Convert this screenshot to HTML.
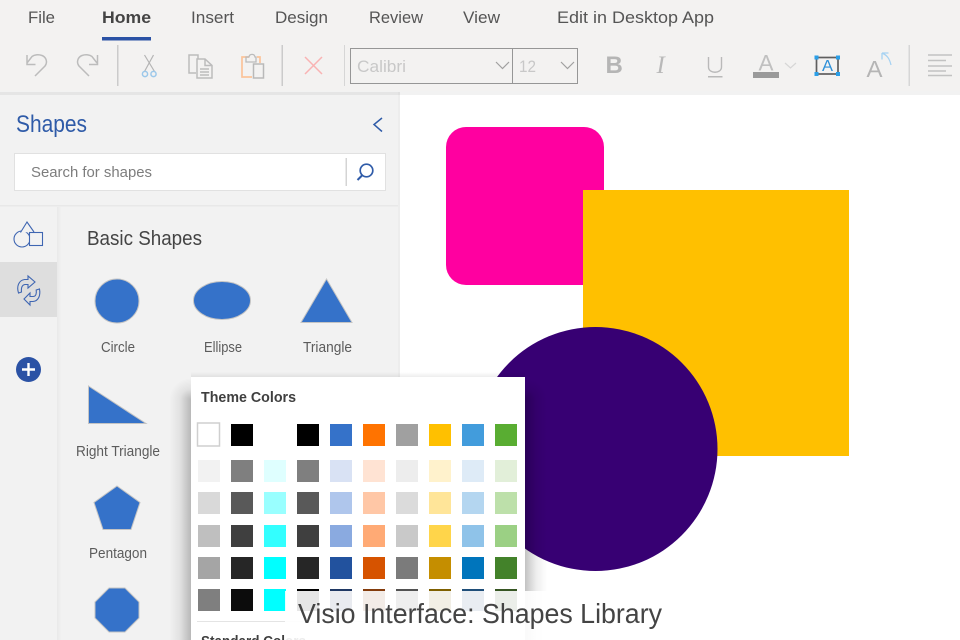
<!DOCTYPE html>
<html lang="en">
<head>
<meta charset="utf-8">
<title>Visio Interface: Shapes Library</title>
<style>
html,body{margin:0;padding:0;width:960px;height:640px;overflow:hidden;background:#fff}
svg{display:block;position:absolute;left:0;top:0}
text{font-family:"Liberation Sans",sans-serif}
.tab{font-size:17px;fill:#555}
.lbl{font-size:15px;fill:#5c5c5c}
.shp{fill:#3572c9;stroke:#c4c4c4;stroke-width:1}
.ic{fill:none;stroke:#bcbcbc;stroke-width:1.5}
.bl{fill:none;stroke:#3f66b2;stroke-width:1.100}
</style>
</head>
<body>
<svg width="960" height="640" viewBox="0 0 960 640" xmlns="http://www.w3.org/2000/svg">
<defs>
<linearGradient id="g1" x1="0" x2="1" y1="0" y2="0"><stop offset="0" stop-color="#000" stop-opacity=".035"/><stop offset="1" stop-color="#000" stop-opacity="0"/></linearGradient>
<linearGradient id="sl" x1="1" x2="0" y1="0" y2="0"><stop offset="0" stop-color="#000" stop-opacity=".24"/><stop offset=".5" stop-color="#000" stop-opacity=".07"/><stop offset="1" stop-color="#000" stop-opacity="0"/></linearGradient>
<linearGradient id="sr" x1="0" x2="1" y1="0" y2="0"><stop offset="0" stop-color="#000" stop-opacity=".24"/><stop offset=".5" stop-color="#000" stop-opacity=".07"/><stop offset="1" stop-color="#000" stop-opacity="0"/></linearGradient>
<linearGradient id="st" x1="0" x2="0" y1="1" y2="0"><stop offset="0" stop-color="#000" stop-opacity=".07"/><stop offset="1" stop-color="#000" stop-opacity="0"/></linearGradient>
<radialGradient id="cl" gradientUnits="userSpaceOnUse" cx="191" cy="400" r="22"><stop offset="0" stop-color="#000" stop-opacity=".24"/><stop offset=".5" stop-color="#000" stop-opacity=".07"/><stop offset="1" stop-color="#000" stop-opacity="0"/></radialGradient>
<radialGradient id="cr" gradientUnits="userSpaceOnUse" cx="525" cy="400" r="22"><stop offset="0" stop-color="#000" stop-opacity=".24"/><stop offset=".5" stop-color="#000" stop-opacity=".07"/><stop offset="1" stop-color="#000" stop-opacity="0"/></radialGradient>
</defs>

<!-- canvas -->
<rect width="960" height="640" fill="#fff"/>
<rect x="446" y="127" width="158" height="158" rx="20" fill="#ff00a0"/>
<rect x="583" y="190" width="266" height="266" fill="#ffc000"/>
<circle cx="595.500" cy="449" r="122" fill="#370073"/>

<!-- panel -->
<rect x="0" y="92" width="398" height="548" fill="#f2f2f2"/>
<rect x="398" y="92" width="2" height="548" fill="#ededed"/>
<rect x="0" y="205" width="398" height="1.500" fill="#e8e8e8"/>
<rect x="57" y="207" width="5" height="433" fill="url(#g1)"/>
<rect x="0" y="262" width="57" height="55" fill="#dedede"/>

<text x="16" y="132" font-size="24" fill="#2f5ba8" textLength="71" lengthAdjust="spacingAndGlyphs">Shapes</text>
<path d="M382 118l-8 6.500 8 7" fill="none" stroke="#2f5ba8" stroke-width="1.500"/>
<rect x="14.500" y="153.500" width="371" height="37" fill="#fff" stroke="#e1e1e1"/>
<text x="31" y="177" font-size="15" fill="#7d7d7d" textLength="121" lengthAdjust="spacingAndGlyphs">Search for shapes</text>
<rect x="345.500" y="158" width="1.500" height="28" fill="#d4d4d4"/>
<circle cx="366.500" cy="170.500" r="6.300" fill="none" stroke="#2f5ba8" stroke-width="1.700"/>
<path d="M362 175.500l-4.500 4.500" stroke="#2f5ba8" stroke-width="2" fill="none"/>

<!-- side tabs -->
<g class="bl">
<circle cx="22" cy="239" r="8"/>
<path d="M20.500 232.500l6.500-10.500 7 10" fill="#f2f2f2"/>
<rect x="29.500" y="232.500" width="13" height="13" fill="#f2f2f2"/>
<path d="M18.500 293c-2-6.500 0-12.500 6-13.500h3.500v-3.500l7 6-7 6v-3.500h-3c-3 .5-4 3-3.500 7.500z"/>
<path d="M39.500 289c1.200 6.500-1 12-6.500 12.500h-3v3.500l-6-6 6-6v3.500h3c3 0 3.700-3 3.200-6.500z"/>
</g>
<circle cx="28.500" cy="369.500" r="12.500" fill="#2b52a5"/>
<path d="M28.500 363v13M22 369.500h13" stroke="#fff" stroke-width="2.400"/>

<!-- shapes -->
<text x="87" y="245" font-size="20.500" fill="#444" textLength="115" lengthAdjust="spacingAndGlyphs">Basic Shapes</text>
<circle class="shp" cx="117" cy="301" r="22"/>
<ellipse class="shp" cx="222" cy="300.500" rx="28.500" ry="19"/>
<polygon class="shp" points="326.500,279 352,322.500 301,322.500"/>
<text class="lbl" x="101" y="352" textLength="34" lengthAdjust="spacingAndGlyphs">Circle</text>
<text class="lbl" x="204" y="352" textLength="38" lengthAdjust="spacingAndGlyphs">Ellipse</text>
<text class="lbl" x="303" y="352" textLength="49" lengthAdjust="spacingAndGlyphs">Triangle</text>
<polygon class="shp" points="88.500,386 88.500,423.500 146,423.500"/>
<text class="lbl" x="76" y="456" textLength="84" lengthAdjust="spacingAndGlyphs">Right Triangle</text>
<polygon class="shp" points="117,486 140,502.500 131,529.500 103,529.500 94,502.500"/>
<text class="lbl" x="89" y="558" textLength="58" lengthAdjust="spacingAndGlyphs">Pentagon</text>
<polygon class="shp" points="109,588 125,588 139,602 139,618 125,632 109,632 95,618 95,602"/>

<!-- ribbon -->
<rect x="0" y="91" width="960" height="4" fill="#000" opacity=".05"/>
<rect x="0" y="0" width="960" height="91.500" fill="#f3f2f1"/>
<text class="tab" x="28" y="23" textLength="27" lengthAdjust="spacingAndGlyphs">File</text>
<text class="tab" x="102" y="23" font-weight="bold" style="fill:#444" textLength="49" lengthAdjust="spacingAndGlyphs">Home</text>
<text class="tab" x="191" y="23" textLength="43" lengthAdjust="spacingAndGlyphs">Insert</text>
<text class="tab" x="275" y="23" textLength="53" lengthAdjust="spacingAndGlyphs">Design</text>
<text class="tab" x="369" y="23" textLength="54" lengthAdjust="spacingAndGlyphs">Review</text>
<text class="tab" x="463" y="23" textLength="37" lengthAdjust="spacingAndGlyphs">View</text>
<text class="tab" x="557" y="23" textLength="157" lengthAdjust="spacingAndGlyphs">Edit in Desktop App</text>
<rect x="102" y="37" width="49" height="3.500" fill="#2b52a5"/>

<!-- dividers -->
<rect x="117" y="45" width="1.500" height="41" fill="#cbcbcb"/>
<rect x="281.500" y="45" width="1.500" height="41" fill="#cbcbcb"/>
<rect x="344" y="45" width="1" height="41" fill="#d6d6d6"/>
<rect x="908.500" y="45" width="1.500" height="41" fill="#d6d6d6"/>

<!-- undo / redo -->
<g class="ic">
<path d="M35 76l10-10c3-4 1-9-3-10.500-4-1.500-8-.5-10 1l-5 6.500M27 55v9.500h8.500"/>
<path d="M89 76l-10-10c-3-4-1-9 3-10.500 4-1.500 8-.5 10 1l5 6.500M97.500 55v9.500h-8.500"/>
</g>
<!-- scissors -->
<path d="M144.500 55l10 16.500M153.500 55l-9 16.500" stroke="#b4b4b4" stroke-width="1.200" fill="none"/>
<circle cx="145" cy="74" r="2.600" fill="none" stroke="#9cc8ea" stroke-width="1.500"/>
<circle cx="153.500" cy="74" r="2.600" fill="none" stroke="#9cc8ea" stroke-width="1.500"/>
<!-- copy -->
<path d="M196 73h-7v-18h9v4" class="ic"/>
<path d="M197 59h8l7 6.500v12.500h-15zM205 59v6.500h7M200 69h9M200 72h9M200 75h9" class="ic"/>
<!-- paste -->
<path d="M249 57h-7v20h10M257 57h3v6" fill="none" stroke="#fbc49a" stroke-width="1.700"/>
<path d="M246 62v-5h3c.5-3.500 5.500-3.500 6 0h1v5z" fill="none" stroke="#bbb" stroke-width="1.300"/>
<rect x="253.500" y="64" width="10" height="14" fill="none" stroke="#b9b9b9" stroke-width="1.500"/>
<!-- delete -->
<path d="M305 57l17 17M322 57l-17 17" stroke="#f9b3b3" stroke-width="1.500" fill="none"/>

<!-- combos -->
<rect x="350.500" y="48.500" width="162" height="35" fill="#f3f2f1" stroke="#969696" stroke-width="1"/>
<rect x="512.500" y="48.500" width="65" height="35" fill="#f3f2f1" stroke="#969696" stroke-width="1"/>
<text x="357" y="72" font-size="17" fill="#c8c8c8" textLength="49" lengthAdjust="spacingAndGlyphs">Calibri</text>
<text x="519" y="72" font-size="17" fill="#c8c8c8" textLength="17" lengthAdjust="spacingAndGlyphs">12</text>
<path d="M496 62l6.500 6.500 6.500-6.500M561 62l6.500 6.500 6.500-6.500" fill="none" stroke="#a0a0a0" stroke-width="1.200"/>

<!-- format -->
<text x="605.500" y="73" font-size="24" font-weight="bold" fill="#b5b5b5">B</text>
<text x="656.500" y="73" font-size="25" font-style="italic" style="font-family:'Liberation Serif',serif" fill="#b9b9b9">I</text>
<path d="M708.500 57v10c0 7 13 7 13 0v-10" fill="none" stroke="#b9b9b9" stroke-width="1.400"/>
<rect x="708" y="76" width="14.500" height="1.500" fill="#b9b9b9"/>
<text x="758.500" y="70.500" font-size="22" fill="#c0c0c0" textLength="15" lengthAdjust="spacingAndGlyphs">A</text>
<rect x="753" y="72" width="26" height="6" fill="#9a9a9a"/>
<path d="M785 63l5.500 5 5.500-5" fill="none" stroke="#d6d6d6" stroke-width="1.200"/>
<rect x="816.500" y="57.500" width="21.500" height="16.500" fill="none" stroke="#5f5f5f" stroke-width="1.700"/>
<g fill="#2a9fe8"><rect x="814.500" y="55.500" width="4" height="4"/><rect x="836" y="55.500" width="4" height="4"/><rect x="814.500" y="72" width="4" height="4"/><rect x="836" y="72" width="4" height="4"/></g>
<text x="822" y="71" font-size="15.500" fill="#2c8fd8" textLength="11" lengthAdjust="spacingAndGlyphs">A</text>
<text x="866.500" y="77" font-size="23" fill="#b5b5b5" textLength="16" lengthAdjust="spacingAndGlyphs">A</text>
<path d="M882 53h6.500M882 53v6.500M882 53c4.500 2 7.500 5 9 12" fill="none" stroke="#a6d2f2" stroke-width="1.300"/>
<path d="M928 55h24M928 60.500h18M928 66h24M928 71h18M928 75.500h24" stroke="#c2c2c2" stroke-width="1.500" fill="none"/>

<!-- popup shadow -->
<rect x="169" y="400" width="22" height="240" fill="url(#sl)"/>
<rect x="525" y="400" width="22" height="240" fill="url(#sr)"/>
<rect x="169" y="378" width="22" height="22" fill="url(#cl)"/>
<rect x="525" y="378" width="22" height="22" fill="url(#cr)"/>
<rect x="191" y="372" width="334" height="5" fill="url(#st)"/>

<!-- color popup -->
<rect x="191" y="377" width="334" height="263" fill="#fff"/>
<text x="201" y="402" font-size="14.500" font-weight="bold" fill="#3f3f3f" textLength="95" lengthAdjust="spacingAndGlyphs">Theme Colors</text>

<rect x="197.500" y="423" width="22" height="23" fill="#fff" stroke="#cfcfcf" stroke-width="1.500"/>
<rect x="231" y="424" width="22" height="22" fill="#000"/>
<rect x="297" y="424" width="22" height="22" fill="#000"/>
<rect x="330" y="424" width="22" height="22" fill="#3572c9"/>
<rect x="363" y="424" width="22" height="22" fill="#ff7300"/>
<rect x="396" y="424" width="22" height="22" fill="#a0a0a0"/>
<rect x="429" y="424" width="22" height="22" fill="#ffc000"/>
<rect x="462" y="424" width="22" height="22" fill="#429cdc"/>
<rect x="495" y="424" width="22" height="22" fill="#59ad32"/>

<rect x="198" y="460" width="22" height="22" fill="#f2f2f2"/>
<rect x="231" y="460" width="22" height="22" fill="#7f7f7f"/>
<rect x="264" y="460" width="22" height="22" fill="#dfffff"/>
<rect x="297" y="460" width="22" height="22" fill="#7f7f7f"/>
<rect x="330" y="460" width="22" height="22" fill="#d9e2f4"/>
<rect x="363" y="460" width="22" height="22" fill="#ffe3d3"/>
<rect x="396" y="460" width="22" height="22" fill="#ededed"/>
<rect x="429" y="460" width="22" height="22" fill="#fff2cc"/>
<rect x="462" y="460" width="22" height="22" fill="#deebf7"/>
<rect x="495" y="460" width="22" height="22" fill="#e2efd9"/>

<rect x="198" y="492" width="22" height="22" fill="#d9d9d9"/>
<rect x="231" y="492" width="22" height="22" fill="#595959"/>
<rect x="264" y="492" width="22" height="22" fill="#99ffff"/>
<rect x="297" y="492" width="22" height="22" fill="#595959"/>
<rect x="330" y="492" width="22" height="22" fill="#afc6ec"/>
<rect x="363" y="492" width="22" height="22" fill="#ffc7a6"/>
<rect x="396" y="492" width="22" height="22" fill="#dbdbdb"/>
<rect x="429" y="492" width="22" height="22" fill="#ffe599"/>
<rect x="462" y="492" width="22" height="22" fill="#b4d6f0"/>
<rect x="495" y="492" width="22" height="22" fill="#bde0aa"/>

<rect x="198" y="525" width="22" height="22" fill="#bfbfbf"/>
<rect x="231" y="525" width="22" height="22" fill="#3f3f3f"/>
<rect x="264" y="525" width="22" height="22" fill="#33ffff"/>
<rect x="297" y="525" width="22" height="22" fill="#3f3f3f"/>
<rect x="330" y="525" width="22" height="22" fill="#8aaae0"/>
<rect x="363" y="525" width="22" height="22" fill="#ffaa75"/>
<rect x="396" y="525" width="22" height="22" fill="#c9c9c9"/>
<rect x="429" y="525" width="22" height="22" fill="#ffd54a"/>
<rect x="462" y="525" width="22" height="22" fill="#8fc3e9"/>
<rect x="495" y="525" width="22" height="22" fill="#9bd084"/>

<rect x="198" y="557" width="22" height="22" fill="#a5a5a5"/>
<rect x="231" y="557" width="22" height="22" fill="#262626"/>
<rect x="264" y="557" width="22" height="22" fill="#00ffff"/>
<rect x="297" y="557" width="22" height="22" fill="#262626"/>
<rect x="330" y="557" width="22" height="22" fill="#22529e"/>
<rect x="363" y="557" width="22" height="22" fill="#d65300"/>
<rect x="396" y="557" width="22" height="22" fill="#7b7b7b"/>
<rect x="429" y="557" width="22" height="22" fill="#c58e00"/>
<rect x="462" y="557" width="22" height="22" fill="#0075bc"/>
<rect x="495" y="557" width="22" height="22" fill="#43822a"/>

<rect x="198" y="589" width="22" height="22" fill="#7f7f7f"/>
<rect x="231" y="589" width="22" height="22" fill="#0c0c0c"/>
<rect x="264" y="589" width="22" height="22" fill="#00ffff"/>
<rect x="297" y="589" width="22" height="22" fill="#000"/>
<rect x="330" y="589" width="22" height="22" fill="#1f3864"/>
<rect x="363" y="589" width="22" height="22" fill="#843c0c"/>
<rect x="396" y="589" width="22" height="22" fill="#525252"/>
<rect x="429" y="589" width="22" height="22" fill="#7f6000"/>
<rect x="462" y="589" width="22" height="22" fill="#1f4e79"/>
<rect x="495" y="589" width="22" height="22" fill="#375623"/>
<rect x="197" y="621" width="320" height="1" fill="#e4e4e4"/>
<text x="201" y="646" font-size="14.500" font-weight="bold" fill="#3f3f3f" textLength="105" lengthAdjust="spacingAndGlyphs">Standard Colors</text>

<!-- caption overlay -->
<rect x="285" y="591" width="395" height="49" fill="#fff" fill-opacity=".9"/>
<text x="298" y="623" font-size="27.500" fill="#444" textLength="364" lengthAdjust="spacingAndGlyphs">Visio Interface: Shapes Library</text>
</svg>
</body>
</html>
